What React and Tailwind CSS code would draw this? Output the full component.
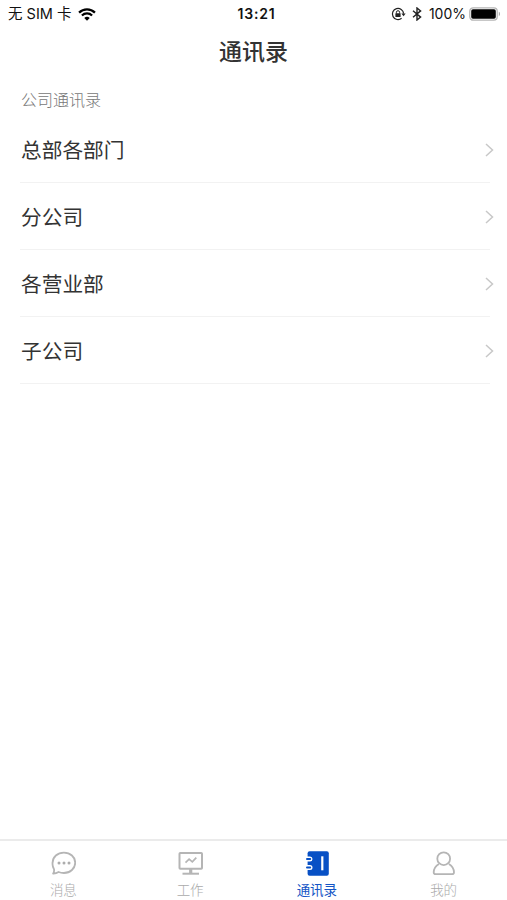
const departments = ["总部各部门", "分公司", "各营业部", "子公司"];

function Wifi() {
  return (
    <svg className="ml-[7px] h-[13px] w-[18px]" viewBox="0 0 17 12" fill="none" stroke="#000" strokeWidth="2.1">
      <path d="M1 4.2a10.6 10.6 0 0 1 15 0" />
      <path d="M3.7 7a6.8 6.8 0 0 1 9.6 0" />
      <path d="M8.5 12 5.9 9.3a3.7 3.7 0 0 1 5.2 0Z" fill="#000" stroke="none" />
    </svg>
  );
}

function RotationLock() {
  return (
    <svg className="h-[14px] w-[15px]" viewBox="0 0 15 14" fill="none" stroke="#222">
      <path d="M10.6 11.3A5.6 5.6 0 1 1 12.6 6.6" strokeWidth="1.2" />
      <path d="M10.4 6.4h4.2L12.6 9.3Z" fill="#222" stroke="none" />
      <rect x="4.4" y="6.3" width="5.2" height="3.8" rx=".5" fill="#222" stroke="none" />
      <path d="M5.4 6.5V5.3a1.6 1.6 0 0 1 3.2 0v1.2" strokeWidth="1" />
    </svg>
  );
}

function Bluetooth() {
  return (
    <svg className="ml-[6px] h-[14px] w-[10px]" viewBox="0 0 10 14" fill="none" stroke="#222" strokeWidth="1.4">
      <path d="m1 3.8 7.6 6.3L5 13V1l3.6 2.9L1 10.2" />
    </svg>
  );
}

function Battery() {
  return (
    <svg className="ml-[3px] h-[14px] w-8" viewBox="0 0 32 14">
      <rect x=".8" y=".8" width="27.4" height="12.4" rx="3.4" fill="#fff" stroke="#b5b5b5" strokeWidth="1.3" />
      <rect x="2.2" y="2.2" width="24.6" height="9.6" rx="1.8" fill="#000" />
      <path d="M29.8 4.8c1.6.6 1.6 3.8 0 4.4Z" fill="#aaa" />
    </svg>
  );
}

function MessageIcon() {
  return (
    <svg className="h-[26px] w-[26px]" viewBox="0 0 26 26" fill="none" stroke="#b5b5b5" strokeWidth="1.8" strokeLinejoin="round">
      <path d="M13.900 2.600c6.400 0 11.300 4.400 11.300 10.100s-4.900 10.300-11.300 10.300c-1.900 0-3.700-.3-5.300-1-1.600 1-3.300 1.600-5.500 1.500.9-1.200 1.200-2.600.9-4.300a9.700 9.700 0 0 1-1.400-6.500c0-5.700 4.900-10.100 11.300-10.100Z" />
      <g fill="#adadad" stroke="none">
        <circle cx="9" cy="13" r="1.500" />
        <circle cx="14" cy="13" r="1.500" />
        <circle cx="19" cy="13" r="1.500" />
      </g>
    </svg>
  );
}

function WorkIcon() {
  return (
    <svg className="h-[26px] w-[26px]" viewBox="0 0 26 26" fill="none" stroke="#b5b5b5" strokeWidth="2">
      <rect x="2.500" y="3" width="22.500" height="15.800" rx=".8" />
      <path d="M13.700 19v4.500" strokeWidth="3.200" />
      <path d="M5.500 23.700h16.500" />
      <path d="m8.500 12.700 3.600-3.500 3.200 2.700 4-4.200" strokeWidth="1.700" />
    </svg>
  );
}

function ContactsIcon() {
  return (
    <svg className="h-[26px] w-[26px]" viewBox="0 0 26 26" fill="none">
      <rect x="3.600" y="1.200" width="21.200" height="24.500" rx="2" fill="#0750c5" />
      <path d="M1 6.400h5a2.500 2.500 0 0 1 0 5H1ZM1 15h5a2.500 2.500 0 0 1 0 5H1Z" fill="#fff" />
      <path d="M3 8.900h3.200M3 17.500h3.200" stroke="#0750c5" strokeWidth="2" strokeLinecap="round" />
      <path d="M18.300 6.300v14" stroke="#fff" strokeWidth="2.200" />
    </svg>
  );
}

function ProfileIcon() {
  return (
    <svg className="h-[26px] w-[26px]" viewBox="0 0 26 26" fill="none" stroke="#b5b5b5" strokeWidth="1.8" strokeLinejoin="round">
      <circle cx="12.700" cy="8.700" r="6.400" />
      <path d="M7.900 13.900c-3.200 1.900-5.100 4.900-5.200 8.300 0 1.300.6 1.900 1.900 1.900h16.500c1.300 0 1.900-.6 1.900-1.900-.1-3.400-2-6.400-5.100-8.300" />
    </svg>
  );
}

const tabs = [
  { label: "消息", Icon: MessageIcon },
  { label: "工作", Icon: WorkIcon },
  { label: "通讯录", Icon: ContactsIcon, active: true },
  { label: "我的", Icon: ProfileIcon },
];

export default function App() {
  return (
    <div className="flex h-[900px] w-[507px] flex-col overflow-hidden bg-white font-['Inter','Noto_Sans_CJK_SC',sans-serif] text-[#333]">
      <header>
        <div className="grid h-7 grid-cols-3 items-center pr-[6px] pl-2 text-sm leading-none text-[#111]">
          <div className="flex items-center whitespace-nowrap">
            <span className="pt-px text-[14.500px]">无 SIM 卡</span>
            <Wifi />
          </div>
          <div className="pl-[4px] text-center font-semibold tracking-[0.800px]">13:21</div>
          <div className="flex items-center justify-end">
            <RotationLock />
            <Bluetooth />
            <span className="ml-[7px]">100%</span>
            <Battery />
          </div>
        </div>
        <h1 className="flex h-12 items-center justify-center pt-px text-[23px] leading-none font-medium">通讯录</h1>
      </header>
      <main className="flex-1 pt-2 pl-5">
        <h2 className="flex h-8 items-center pl-px text-base leading-none font-light text-[#777]">公司通讯录</h2>
        <ul>
          {departments.map((name) => (
            <li key={name} className="mr-[17px] flex h-[67px] items-center justify-between border-b border-[#f2f2f2] pl-px text-[20.700px] leading-none">
              <span className="pt-[5px]">{name}</span>
              <svg className="-mr-[4px] mt-px h-[14px] w-[9px]" viewBox="0 0 9 14" fill="none" stroke="#c8c8c8" strokeWidth="1.500">
                <path d="m1 1 6.500 6L1 13" />
              </svg>
            </li>
          ))}
        </ul>
      </main>
      <nav className="grid h-[61px] grid-cols-4 border-t-2 border-[#ebebeb]">
        {tabs.map(({ label, Icon, active }) => (
          <div key={label} className={`flex flex-col items-center pt-[9px] text-[13.500px] leading-none ${active ? "text-[#1455c5]" : "font-light text-[#aaa]"}`}>
            <Icon />
            <span className="mt-2">{label}</span>
          </div>
        ))}
      </nav>
    </div>
  );
}
